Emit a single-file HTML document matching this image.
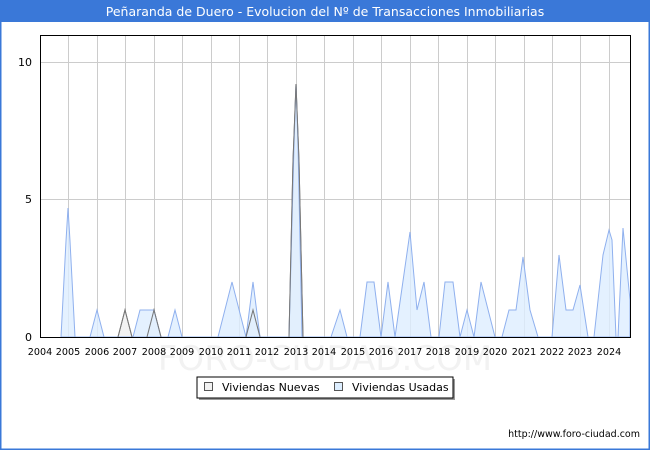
<!DOCTYPE html><html><head><style>
body{margin:0;width:650px;height:450px;background:#fff;font-family:"DejaVu Sans",sans-serif;overflow:hidden}
</style></head><body>
<svg width="650" height="450" xmlns="http://www.w3.org/2000/svg" font-family="DejaVu Sans, sans-serif">
<rect x="0" y="0" width="650" height="450" fill="#fff"/>
<rect x="0" y="0" width="650" height="22" fill="#3a78d8"/>
<rect x="0" y="0" width="1.5" height="450" fill="#3a78d8"/><rect x="648.5" y="0" width="1.5" height="450" fill="#3a78d8"/><rect x="0" y="448.5" width="650" height="1.5" fill="#3a78d8"/>
<text x="325" y="16" fill="#fff" font-size="12.5" text-anchor="middle">Peñaranda de Duero - Evolucion del Nº de Transacciones Inmobiliarias</text>
<g stroke="#cccccc" stroke-width="1">
<line x1="40" y1="62.5" x2="630" y2="62.5"/><line x1="40" y1="199.5" x2="630" y2="199.5"/>
<path d="M68.5 35V337M97.5 35V337M125.5 35V337M154.5 35V337M182.5 35V337M211.5 35V337M239.5 35V337M267.5 35V337M296.5 35V337M324.5 35V337M353.5 35V337M381.5 35V337M410.5 35V337M438.5 35V337M467.5 35V337M495.5 35V337M524.5 35V337M552.5 35V337M580.5 35V337M609.5 35V337"/>
</g>
<text x="325" y="370" font-size="34" fill="#f2f2f2" text-anchor="middle">FORO-CIUDAD.COM</text>
<polygon fill="#f2f2f2" stroke="#777" stroke-width="1" points="118,337 125,310 132,337 147,337 154,310 161,337 246,337 253,310 260,337 289,337 293,161 296,84 299,161 303,337"/>
<polygon fill="#ddeeff" fill-opacity="0.8" stroke="#8fb0ee" stroke-width="1" points="61,337 66,241 68,208 70,241 75,337 90,337 97,310 104,337 133,337 140,310 154,310 161,337 168,337 175,310 182,337 218,337 232,282 246,337 253,282 260,337 289,337 294,145 296,84 298,145 302,337 331,337 340,310 347,337 360,337 367,282 374,282 381,337 388,282 395,337 410,232 417,310 424,282 431,337 439,337 445,282 453,282 460,337 467,310 474,337 481,282 495,337 502,337 509,310 516,310 523,257 530,310 538,337 552,337 559,255 566,310 573,310 580,285 588,337 594,337 603,255 609,230 612,240 616,337 618,337 623,228 630,300 630,337"/>
<path d="M118 337L125 310L132 337M147 337L154 310L161 337M246 337L253 310L260 337M289 337L293 161L296 84L299 161L303 337" fill="none" stroke="#777"/>
<rect x="40.5" y="35.5" width="590" height="302" fill="none" stroke="#000" stroke-width="1"/>
<g font-size="11" fill="#000">
<text x="32" y="341" text-anchor="end">0</text><text x="32" y="203" text-anchor="end">5</text><text x="32" y="66" text-anchor="end">10</text>
</g>
<g font-size="9.6" fill="#000" text-anchor="middle">
<text x="40" y="355">2004</text><text x="68" y="355">2005</text><text x="97" y="355">2006</text><text x="125" y="355">2007</text><text x="154" y="355">2008</text><text x="182" y="355">2009</text><text x="211" y="355">2010</text><text x="239" y="355">2011</text><text x="267" y="355">2012</text><text x="296" y="355">2013</text><text x="324" y="355">2014</text><text x="353" y="355">2015</text><text x="381" y="355">2016</text><text x="410" y="355">2017</text><text x="438" y="355">2018</text><text x="467" y="355">2019</text><text x="495" y="355">2020</text><text x="524" y="355">2021</text><text x="552" y="355">2022</text><text x="580" y="355">2023</text><text x="609" y="355">2024</text>
</g>
<rect x="199" y="379" width="256" height="21" fill="#999"/>
<rect x="197" y="377" width="256" height="21" fill="#fff" stroke="#000" stroke-width="1"/>
<rect x="204.5" y="382.5" width="8" height="8" fill="#f2f2f2" stroke="#555"/>
<text x="222" y="391" font-size="11">Viviendas Nuevas</text>
<rect x="334.5" y="382.5" width="8" height="8" fill="#ddeeff" stroke="#555"/>
<text x="352" y="391" font-size="11">Viviendas Usadas</text>
<text x="640" y="437" font-size="9.5" text-anchor="end">http://www.foro-ciudad.com</text>
</svg>
</body></html>
